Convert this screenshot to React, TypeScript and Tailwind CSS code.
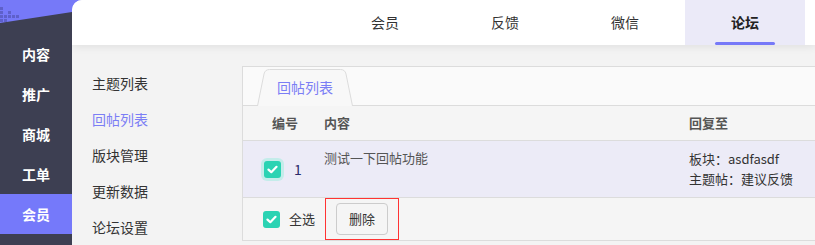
import React from "react";

const font = { fontFamily: '"Noto Sans CJK SC", "Noto Sans", sans-serif' };

function Check({ ring }: { ring?: boolean }) {
  return (
    <span
      className={`inline-flex items-center justify-center w-[17px] h-[17px] rounded-[3px] bg-[#2bd3b3] ${
        ring ? "shadow-[0_0_0_3px_#c4ecea]" : ""
      }`}
    >
      <svg width="11" height="9" viewBox="0 0 11 9">
        <path d="M1.5 4.6 L4.3 7.2 L9.5 1.8" fill="none" stroke="#fff" strokeWidth="2.2" strokeLinecap="round" strokeLinejoin="round" />
      </svg>
    </span>
  );
}

export default function App() {
  const side = ["内容", "推广", "商城", "工单", "会员"];
  const nav = ["会员", "反馈", "微信", "论坛"];
  const sub = ["主题列表", "回帖列表", "版块管理", "更新数据", "论坛设置"];
  return (
    <div className="flex w-[815px] h-[245px] overflow-hidden bg-[#3d3f52]" style={font}>
      <div className="w-[72px] shrink-0 flex flex-col">
        <div className="h-[34px] relative">
          <svg width="72" height="34" viewBox="0 0 72 34" className="absolute left-0 top-0">
            <polygon points="0,0 72,0 72,12 0,23" fill="#7679f8" />
            <g fill="#5a5cc2" opacity="0.85">
              <rect x="0" y="7" width="3" height="3" />
              <rect x="0" y="11" width="3" height="3" />
              <rect x="4" y="15" width="3" height="3" />
              <rect x="8" y="11" width="3" height="3" />
              <rect x="8" y="15" width="3" height="3" />
              <rect x="12" y="15" width="3" height="3" />
              <rect x="16" y="15" width="3" height="3" />
              <rect x="0" y="15" width="3" height="3" />
              <rect x="0" y="19" width="3" height="3" />
              <rect x="4" y="19" width="3" height="3" />
            </g>
          </svg>
        </div>
        {side.map((s, i) => (
          <div
            key={s}
            className={`h-10 flex items-center pl-[22px] text-[14px] font-bold text-white ${
              i === 4 ? "bg-[#7579fa]" : ""
            }`}
          >
            {s}
          </div>
        ))}
      </div>
      <div className="flex-1 bg-[#7679f8]">
        <div className="h-full rounded-tl-[10px] bg-[#f3f3f3] flex flex-col overflow-hidden">
          <div className="h-[45px] shrink-0 bg-white shadow-[0_2px_8px_rgba(0,0,0,0.08)] flex justify-end pr-[10px] relative z-10">
            {nav.map((n, i) => (
              <div
                key={n}
                className={`w-[120px] relative flex items-center justify-center text-[14px] ${
                  i === 3 ? "bg-[#ebeaf8] font-bold text-[#222]" : "text-[#333]"
                }`}
              >
                {n}
                {i === 3 && (
                  <span className="absolute bottom-0 left-[30px] w-[60px] h-[3px] rounded-full bg-[#7679f8]" />
                )}
              </div>
            ))}
          </div>
          <div className="flex flex-1">
            <div className="w-[170px] shrink-0 pt-[20px] pl-[20px] flex flex-col">
              {sub.map((s, i) => (
                <div
                  key={s}
                  className={`h-[36px] flex items-center text-[14px] ${
                    i === 1 ? "text-[#7b7ef5]" : "text-[#333]"
                  }`}
                >
                  {s}
                </div>
              ))}
            </div>
            <div className="flex-1 pt-[21px] pb-[5px]">
              <div className="h-full border border-[#dcdcdc] border-r-0 bg-[#f5f5f5] flex flex-col">
                <div className="h-[39px] bg-[#fafafa] border-b border-[#dcdcdc] flex items-end pl-[14px]">
                  <div className="relative w-[96px] h-[37px] -mb-px flex items-center justify-center text-[14px] text-[#7b7ef5]">
                    <svg width="96" height="37" viewBox="0 0 96 37" className="absolute left-0 top-0">
                      <path d="M0.5 37 L7 5 Q8 0.5 12.5 0.5 L83.5 0.5 Q88 0.5 89 5 L95.5 37" fill="#f8f8f8" stroke="#dcdcdc" strokeWidth="1" />
                    </svg>
                    <span className="relative">回帖列表</span>
                  </div>
                </div>
                <div className="h-[35px] flex items-center text-[13px] font-bold text-[#555] border-b border-[#dcdcdc]">
                  <span className="ml-[29px] w-[52px]">编号</span>
                  <span className="w-[365px]">内容</span>
                  <span>回复至</span>
                </div>
                <div className="h-[57px] bg-[#ecebf7] border-b border-[#dcdcdc] flex text-[13px] text-[#555]">
                  <div className="ml-[21px] w-[30px] flex items-center">
                    <Check ring />
                  </div>
                  <div className="w-[30px] flex items-center text-[#2b2b6b] text-[14px]">1</div>
                  <div className="w-[365px] pt-[7px]">测试一下回帖功能</div>
                  <div className="pt-[8px] leading-[20px] text-[#333]">
                    <div>板块：asdfasdf</div>
                    <div>主题帖：建议反馈</div>
                  </div>
                </div>
                <div className="flex-1 flex items-center">
                  <div className="ml-[20px] flex items-center">
                    <Check />
                  </div>
                  <span className="ml-[9px] text-[13px] text-[#333]">全选</span>
                  <div className="ml-[10px] w-[74px] h-[42px] border border-[#f33] flex items-center justify-center">
                    <button className="w-[52px] h-[32px] border border-[#ccc] rounded-[4px] bg-[#f5f5f5] text-[13px] text-[#333]">
                      删除
                    </button>
                  </div>
                </div>
              </div>
            </div>
          </div>
        </div>
      </div>
    </div>
  );
}
